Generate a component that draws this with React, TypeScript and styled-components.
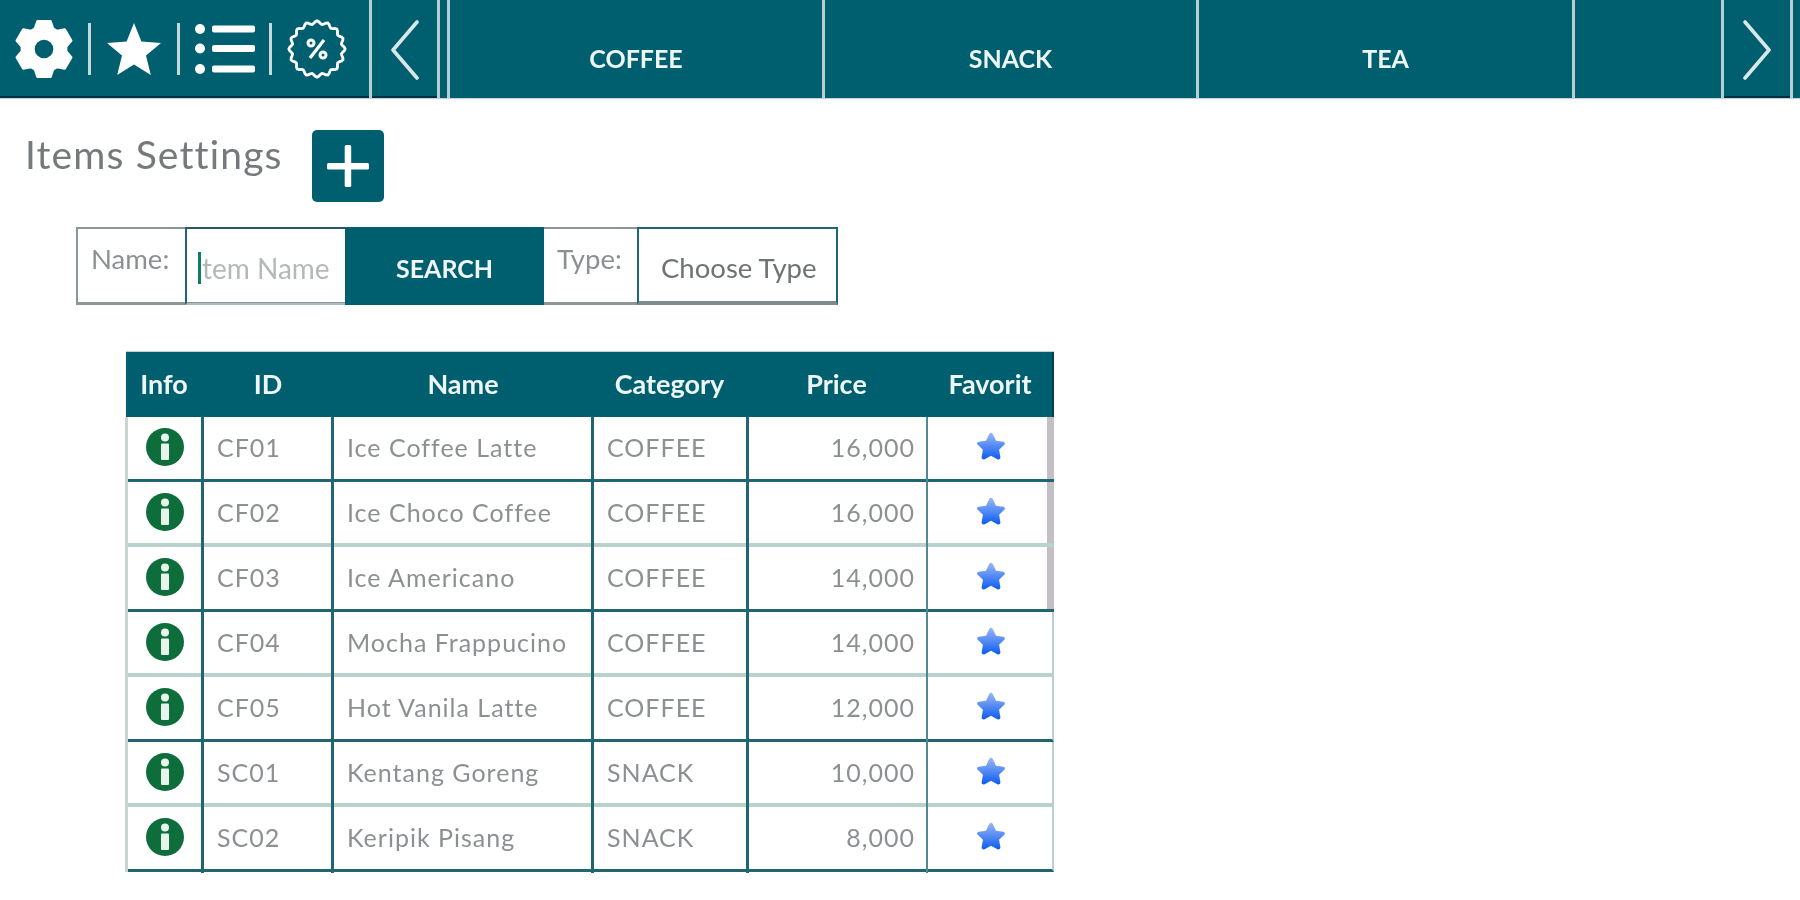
import React from "react";
import styled, { createGlobalStyle } from "styled-components";

const TEAL = "#005f6e";
const LINE = "#1f6672";
const SOFT = "#b9d2cd";

const Global = createGlobalStyle`
  html, body { margin: 0; padding: 0; background: #fff; }
  body { font-family: Lato, "Open Sans", "Liberation Sans", sans-serif; overflow: hidden; }
`;

const Page = styled.div`
  width: 1800px;
  height: 900px;
  overflow: hidden;
  background: #fff;
  filter: blur(0.7px);
`;

const TopBar = styled.header`
  display: flex;
  height: 98px;
  background: ${TEAL};
  box-shadow: 0 1px 1px #c4d4d6;
`;

const IconGroup = styled.div`
  width: 369px;
  height: 98px;
  flex: none;
  display: flex;
  align-items: center;
  padding: 0 0 2px 11px;
  box-sizing: border-box;
  border-bottom: 2px solid #082f42;
`;

const IconSlot = styled.div<{ $w: number }>`
  width: ${(p) => p.$w}px;
  height: 70px;
  flex: none;
  display: flex;
  align-items: center;
  justify-content: center;
  color: #fff;
  margin-top: 4px;
`;

const Rule = styled.span`
  width: 3px;
  height: 52px;
  background: #c6d8da;
  flex: none;
  margin-top: 4px;
`;

const BarSeparator = styled.span`
  width: 3px;
  height: 98px;
  flex: none;
  background: #b9cdd0;
`;

const NavCell = styled.div<{ $w: number }>`
  width: ${(p) => p.$w}px;
  height: 98px;
  box-sizing: border-box;
  padding-top: 4px;
  border-bottom: 2px solid #082f42;
  display: flex;
  align-items: center;
  justify-content: center;
  flex: none;
`;

const Spacer = styled.span<{ $w: number }>`
  width: ${(p) => p.$w}px;
  flex: none;
`;

const Tab = styled.div<{ $w: number }>`
  width: ${(p) => p.$w}px;
  height: 98px;
  flex: none;
  display: flex;
  justify-content: center;
  padding-top: 44px;
  box-sizing: border-box;
  color: #eef5f5;
  font-size: 25px;
  font-weight: 700;
  line-height: 28px;
`;

const TitleRow = styled.div`
  display: flex;
  align-items: flex-start;
  padding: 32px 0 0 25px;
`;

const Title = styled.h1`
  width: 287px;
  flex: none;
  margin: 2px 0 0 0;
  font-size: 39px;
  line-height: 44px;
  font-weight: 400;
  color: #75797b;
  letter-spacing: 1.15px;
  white-space: nowrap;
`;

const AddButton = styled.button`
  width: 72px;
  height: 72px;
  border: 0;
  padding: 0;
  border-radius: 5px;
  background: ${TEAL};
  display: flex;
  align-items: center;
  justify-content: center;
`;

const SearchBar = styled.form`
  display: flex;
  width: 762px;
  height: 78px;
  margin: 25px 0 0 76px;
  box-sizing: border-box;
  border: 2px solid #8f9698;
  border-bottom-width: 3px;
  background: #fff;
`;

const FieldLabel = styled.label<{ $w: number }>`
  width: ${(p) => p.$w}px;
  flex: none;
  box-sizing: border-box;
  padding: 15px 0 0 13px;
  font-size: 27.5px;
  line-height: 30px;
  color: #8b9092;
`;

const TextField = styled.div`
  width: 160px;
  flex: none;
  box-sizing: border-box;
  border: 2px solid ${LINE};
  border-bottom-color: #a9bdc0;
  border-top-color: #2a5b63;
  border-right: 0;
  margin: -2px 0 -3px;
  display: flex;
  align-items: center;
  padding: 4px 0 0 11px;
  font-size: 28px;
  color: #b4b8ba;
  white-space: nowrap;
`;

const Caret = styled.span`
  width: 3px;
  height: 32px;
  background: #0f7d62;
  margin-right: 1px;
  flex: none;
`;

const SearchButton = styled.button`
  width: 199px;
  flex: none;
  margin: -2px 0 -3px;
  border: 0;
  background: ${TEAL};
  color: #f1f6f6;
  font: 700 25px Lato, sans-serif;
  padding: 3px 0 0;
`;

const SelectField = styled.div`
  flex: 1;
  box-sizing: border-box;
  margin: -2px -2px -3px 0;
  border: 2px solid ${LINE};
  border-bottom: 4px solid #7d8b8d;
  padding: 5px 0 0 22px;
  display: flex;
  align-items: center;
  font-size: 27.5px;
  color: #6f7375;
`;

const Table = styled.div`
  width: 928px;
  margin: 47px 0 0 126px;
`;

const HeadRow = styled.div`
  display: grid;
  grid-template-columns: 76px 132px 258px 155px 179px 128px;
  height: 65px;
  background: ${TEAL};
  box-shadow: inset -2px 0 0 #0b3c4a, 0 -1px 1px #c9d2d3;
`;

const HeadCell = styled.div`
  display: flex;
  align-items: center;
  justify-content: center;
  color: #eef5f5;
  font-size: 27px;
  font-weight: 700;
  padding-bottom: 2px;
`;

const Body = styled.div`
  position: relative;
  border-left: 3px solid #cdd3d3;
  margin-left: -1px;
`;

const Row = styled.div<{ $soft: boolean; $edge: boolean }>`
  position: relative;
  z-index: 1;
  display: grid;
  grid-template-columns: 76px 130px 260px 155px 179px 126px;
  height: 65px;
  box-sizing: border-box;
  border-bottom: ${(p) => (p.$soft ? `4px solid ${SOFT}` : `3px solid ${LINE}`)};
  border-right: ${(p) => (p.$edge ? "0" : `2px solid ${SOFT}`)};
`;

const Cell = styled.div<{ $align?: string; $faint?: boolean; $last?: boolean }>`
  display: flex;
  align-items: center;
  justify-content: ${(p) => p.$align || "flex-start"};
  padding: ${(p) =>
    p.$align === "flex-end" ? "0 11px 6px 0" : p.$align ? "0 0 6px" : "0 0 6px 13px"};
  box-sizing: border-box;
  font-size: 25px;
  letter-spacing: 1px;
  color: #8c9092;
  white-space: nowrap;
  border-right: ${(p) => (p.$last ? "0" : p.$faint ? "2px solid #4f8a90" : `3px solid ${LINE}`)};
  margin-bottom: -4px;
`;

const Scrollbar = styled.div`
  position: absolute;
  z-index: 0;
  right: 0;
  top: 0;
  width: 7px;
  height: 193px;
  background: #c2c0c4;
`;

const gearOutline = () => {
  const cx = 30;
  const cy = 30;
  const teeth = 6;
  const pts: string[] = [];
  const at = (deg: number, r: number) => {
    const a = ((deg - 90) * Math.PI) / 180;
    return `${(cx + r * Math.cos(a)).toFixed(2)} ${(cy + r * Math.sin(a)).toFixed(2)}`;
  };
  for (let i = 0; i < teeth; i++) {
    const c = (i * 360) / teeth;
    pts.push(at(c - 24, 21.5), at(c - 13, 27.5), at(c + 13, 27.5), at(c + 24, 21.5));
  }
  return `M${pts.join("L")}Z`;
};

const Gear = () => (
  <svg width="62" height="62" viewBox="0 0 60 60" style={{ flex: "none" }}>
    <path
      d={gearOutline()}
      fill="#fff"
      stroke="#fff"
      strokeWidth="2.5"
      strokeLinejoin="round"
    />
    <circle cx="30" cy="30" r="9" fill={TEAL} />
  </svg>
);

const SolidStar = () => (
  <svg width="56" height="54" viewBox="0 0 56 54" fill="#fff">
    <path d="M28 1l7.4 18.6L55 21 40 33.6 44.8 53 28 42.4 11.2 53 16 33.6 1 21l19.6-1.4z" />
  </svg>
);

const ListIcon = () => (
  <svg width="62" height="52" viewBox="0 0 62 52" fill="#fff">
    <circle cx="6" cy="6" r="5" />
    <circle cx="6" cy="25.5" r="5" />
    <circle cx="6" cy="46" r="5" />
    <rect x="18" y="2.5" width="43" height="7" rx="2" />
    <rect x="18" y="22" width="43" height="7" rx="2" />
    <rect x="18" y="42.5" width="43" height="7" rx="2" />
  </svg>
);

const wavyPath = () => {
  const pts: string[] = [];
  const n = 96;
  for (let i = 0; i <= n; i++) {
    const a = (i / n) * Math.PI * 2;
    const r = 26.5 + 1.6 * Math.cos(a * 16);
    pts.push(`${(30 + r * Math.cos(a)).toFixed(2)},${(30 + r * Math.sin(a)).toFixed(2)}`);
  }
  return `M${pts.join("L")}Z`;
};

const PercentBadge = () => (
  <svg width="60" height="60" viewBox="0 0 60 60" fill="none">
    <path d={wavyPath()} stroke="#fff" strokeWidth="2.8" />
    <circle cx="24" cy="24" r="3" stroke="#fff" strokeWidth="3" />
    <circle cx="36" cy="36" r="3" stroke="#fff" strokeWidth="3" />
    <path d="M37 21 23 39" stroke="#fff" strokeWidth="3.2" />
  </svg>
);

const Chevron = ({ right }: { right?: boolean }) => (
  <svg width="30" height="60" viewBox="0 0 30 60" fill="none">
    <path
      d={right ? "M3 2 27 30 3 58" : "M27 2 3 30 27 58"}
      stroke="#d9e7e9"
      strokeWidth="3.6"
      strokeLinecap="round"
      strokeLinejoin="round"
    />
  </svg>
);

const Plus = () => (
  <svg width="42" height="42" viewBox="0 0 42 42" fill="#fff">
    <rect x="0" y="18" width="42" height="6.5" rx="1.5" />
    <rect x="17.7" y="0" width="6.5" height="42" rx="1.5" />
  </svg>
);

const InfoIcon = () => (
  <svg width="38" height="38" viewBox="0 0 38 38">
    <circle cx="19" cy="19" r="19" fill="#0d6e3c" />
    <circle cx="19" cy="9.5" r="4" fill="#e8f3ec" />
    <rect x="15" y="15.5" width="8" height="16.5" rx="1" fill="#e8f3ec" />
  </svg>
);

const BlueStar = () => (
  <svg width="34" height="32" viewBox="0 0 32 30">
    <defs>
      <linearGradient id="blueStarFill" x1="0" y1="0" x2="0" y2="1">
        <stop offset="0" stopColor="#9db8f4" />
        <stop offset="0.55" stopColor="#4d86f5" />
        <stop offset="1" stopColor="#0c5cf0" />
      </linearGradient>
    </defs>
    <path
      d="M16 1.5c.8 0 1.3.6 1.7 1.3l3 6.2 6.8 1c1.6.2 2.1 1.8 1 2.9l-4.9 4.8 1.2 6.8c.3 1.6-1.4 2.7-2.8 2l-6-3.2-6 3.2c-1.4.7-3.1-.4-2.8-2l1.2-6.8-4.9-4.8c-1.1-1.1-.6-2.7 1-2.9l6.8-1 3-6.2c.4-.7.9-1.3 1.7-1.3z"
      fill="url(#blueStarFill)"
    />
  </svg>
);

const ITEMS = [
  ["CF01", "Ice Coffee Latte", "COFFEE", "16,000"],
  ["CF02", "Ice Choco Coffee", "COFFEE", "16,000"],
  ["CF03", "Ice Americano", "COFFEE", "14,000"],
  ["CF04", "Mocha Frappucino", "COFFEE", "14,000"],
  ["CF05", "Hot Vanila Latte", "COFFEE", "12,000"],
  ["SC01", "Kentang Goreng", "SNACK", "10,000"],
  ["SC02", "Keripik Pisang", "SNACK", "8,000"],
];

const HEADS = ["Info", "ID", "Name", "Category", "Price", "Favorit"];

export default function App() {
  return (
    <Page>
      <Global />
      <TopBar>
        <IconGroup>
          <IconSlot $w={66}><Gear /></IconSlot>
          <Spacer $w={11} />
          <Rule />
          <IconSlot $w={86}><SolidStar /></IconSlot>
          <Rule />
          <IconSlot $w={89}><ListIcon /></IconSlot>
          <Rule />
          <IconSlot $w={90}><PercentBadge /></IconSlot>
        </IconGroup>
        <BarSeparator />
        <NavCell $w={65}><Chevron /></NavCell>
        <BarSeparator />
        <Spacer $w={7} />
        <BarSeparator />
        <Tab $w={372}>COFFEE</Tab>
        <BarSeparator />
        <Tab $w={371}>SNACK</Tab>
        <BarSeparator />
        <Tab $w={373}>TEA</Tab>
        <BarSeparator />
        <Tab $w={146} />
        <BarSeparator />
        <NavCell $w={66}><Chevron right /></NavCell>
        <BarSeparator />
      </TopBar>
      <TitleRow>
        <Title>Items Settings</Title>
        <AddButton type="button" aria-label="Add"><Plus /></AddButton>
      </TitleRow>
      <SearchBar>
        <FieldLabel $w={107}>Name:</FieldLabel>
        <TextField><Caret />tem Name</TextField>
        <SearchButton type="button">SEARCH</SearchButton>
        <FieldLabel $w={93}>Type:</FieldLabel>
        <SelectField>Choose Type</SelectField>
      </SearchBar>
      <Table>
        <HeadRow>
          {HEADS.map((h) => <HeadCell key={h}>{h}</HeadCell>)}
        </HeadRow>
        <Body>
          <Scrollbar />
          {ITEMS.map((it, i) => (
            <Row key={it[0]} $soft={i % 2 === 1} $edge={i < 3}>
              <Cell $align="center"><InfoIcon /></Cell>
              <Cell>{it[0]}</Cell>
              <Cell>{it[1]}</Cell>
              <Cell>{it[2]}</Cell>
              <Cell $align="flex-end" $faint>{it[3]}</Cell>
              <Cell $align="center" $last><BlueStar /></Cell>
            </Row>
          ))}
        </Body>
      </Table>
    </Page>
  );
}
